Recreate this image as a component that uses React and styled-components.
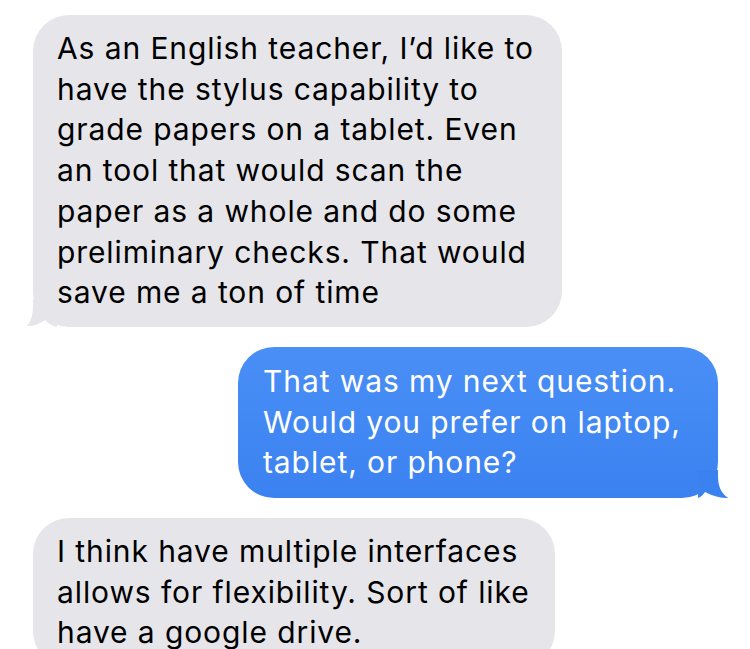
import React from "react";
import styled, { createGlobalStyle } from "styled-components";

const Global = createGlobalStyle`
  html, body { margin: 0; padding: 0; background: #ffffff; }
  body { font-family: Inter, "Noto Sans", "Liberation Sans", sans-serif; overflow: hidden; }
`;

const Thread = styled.div`
  display: flex;
  flex-direction: column;
  gap: 20px;
  padding: 15px 32px 0 33px;
  height: 649px;
  box-sizing: border-box;
  overflow: hidden;
`;

const Row = styled.div`
  display: flex;
  justify-content: ${(p) => (p.$mine ? "flex-end" : "flex-start")};
`;

const Bubble = styled.div`
  position: relative;
  box-sizing: border-box;
  width: ${(p) => p.$w}px;
  padding: ${(p) => (p.$mine ? "14px 0 15px 25px" : "13px 0 14px 24px")};
  border-radius: 36px;
  background: ${(p) =>
    p.$mine ? "linear-gradient(180deg, #4a8ff6 0%, #3b82f1 100%)" : "#e5e5ea"};
  color: ${(p) => (p.$mine ? "#ffffff" : "#000000")};
  font-size: 30px;
  line-height: 40.7px;
  letter-spacing: 0.9px;
  white-space: nowrap;
`;

const Line = styled.span`
  display: block;
`;

const Tail = styled.svg`
  position: absolute;
  bottom: 0;
  width: 30px;
  height: 28px;
  ${(p) => (p.$mine ? "right: -10px;" : "left: -6px;")}
`;

function BubbleTail({ mine, color }) {
  const d = mine
    ? "M20 0 L20 6 C20 16 23 23 30 28 C24 28.3 15 26.5 7 22 C5 25 3 27 0 28 L0 0 Z"
    : "M6 0 L6 6 C6 16 4 22 0 27 C6 27.5 12 25 18 21 C22 25 26 27.5 30 28 L30 0 Z";
  return (
    <Tail $mine={mine} viewBox="0 0 30 28">
      <path d={d} fill={color} />
    </Tail>
  );
}

const messages = [
  {
    mine: false,
    w: 529,
    lines: [
      "As an English teacher, I\u2019d like to",
      "have the stylus capability to",
      "grade papers on a tablet. Even",
      "an tool that would scan the",
      "paper as a whole and do some",
      "preliminary checks. That would",
      "save me a ton of time",
    ],
    tail: true,
  },
  {
    mine: true,
    w: 480,
    lines: [
      "That was my next question.",
      "Would you prefer on laptop,",
      "tablet, or phone?",
    ],
    tail: true,
  },
  {
    mine: false,
    w: 522,
    lines: [
      "I think have multiple interfaces",
      "allows for flexibility. Sort of like",
      "have a google drive.",
    ],
    tail: false,
  },
];

export default function App() {
  return (
    <>
      <Global />
      <Thread>
        {messages.map((m, i) => (
          <Row key={i} $mine={m.mine}>
            <Bubble $mine={m.mine} $w={m.w}>
              {m.lines.map((l, j) => (
                <Line key={j}>{l}</Line>
              ))}
              {m.tail && (
                <BubbleTail mine={m.mine} color={m.mine ? "#3b82f1" : "#e5e5ea"} />
              )}
            </Bubble>
          </Row>
        ))}
      </Thread>
    </>
  );
}
